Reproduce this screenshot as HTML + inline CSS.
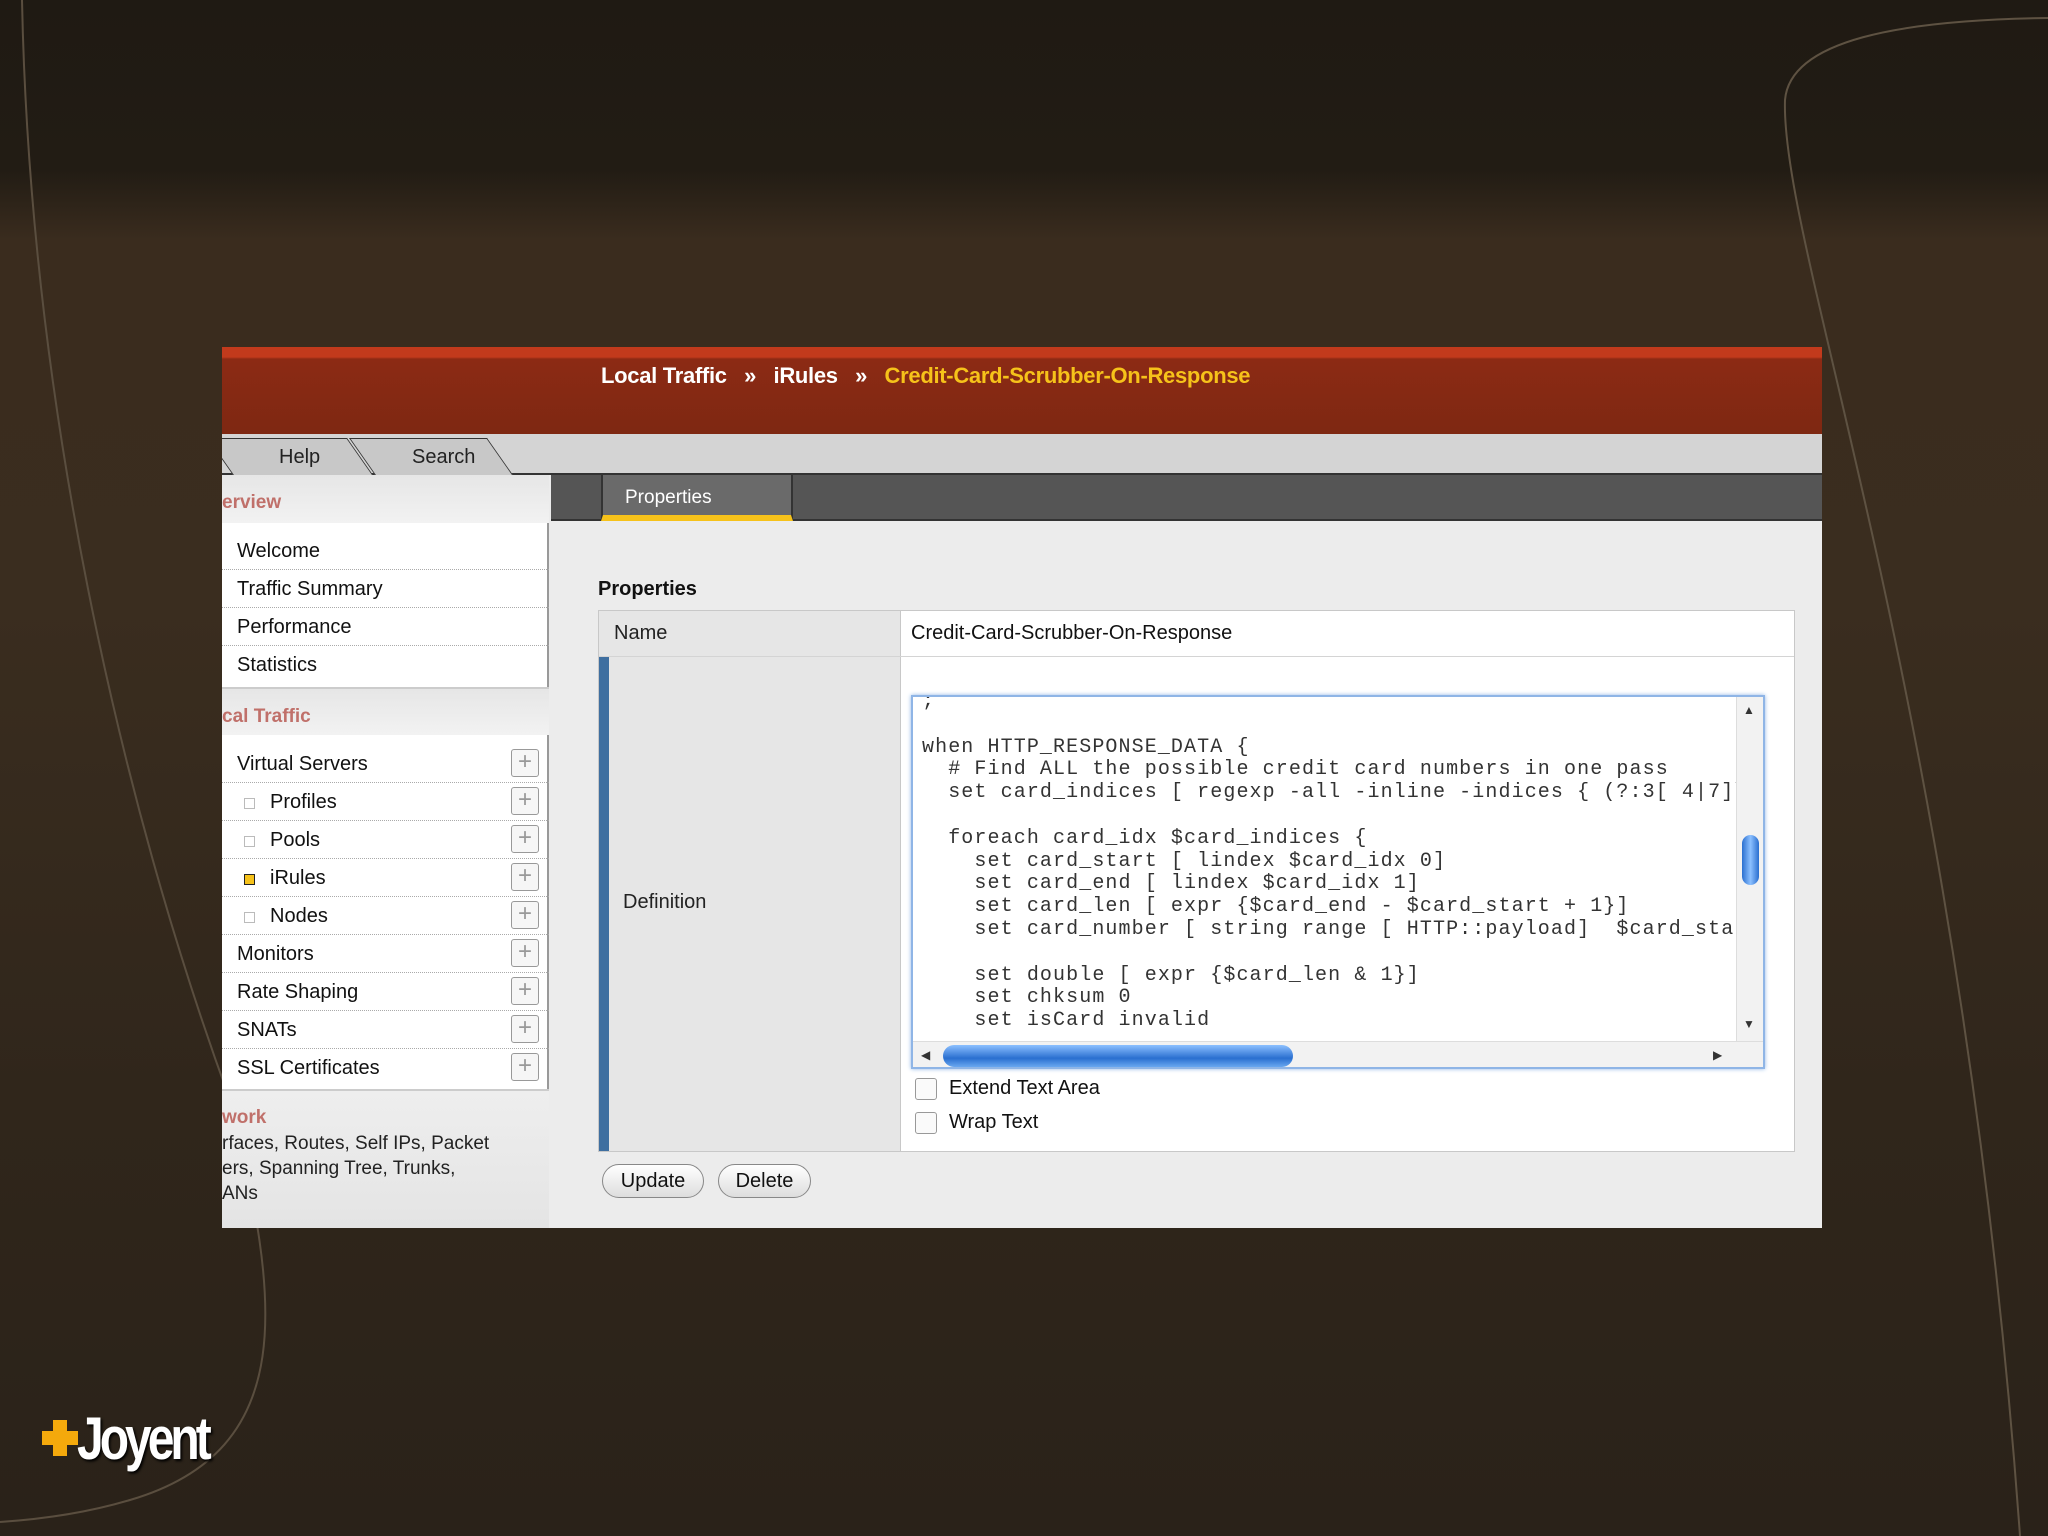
<!DOCTYPE html>
<html><head><meta charset="utf-8"><style>
*{margin:0;padding:0;box-sizing:border-box}
body{width:2048px;height:1536px;overflow:hidden;position:relative;font-family:"Liberation Sans",sans-serif;
background:linear-gradient(180deg,#1f1a13 0px,#221c14 170px,#3a2c1e 240px,#3a2d1f 600px,#30261b 1100px,#2a2219 1536px);}
.abs{position:absolute}
#shot{left:222px;top:347px;width:1600px;height:881px;background:#ececec;overflow:hidden}
#hdr{left:0;top:0;width:1600px;height:87px;background:linear-gradient(180deg,#c23a1c 0,#c23a1c 10px,#8c2a14 12px,#7e2812 87px)}
#crumb{left:379px;top:16px;font-weight:bold;font-size:22px;color:#fff;letter-spacing:-0.3px;white-space:nowrap}
#crumb .y{color:#f6c21a}
#tabs{left:0;top:87px;width:1600px;height:41px;background:#d4d4d4;border-bottom:2px solid #333}
.tab{position:absolute;top:4px;height:37px;background:#c8c8c8;border:1.5px solid #333;border-bottom:none;transform:skewX(35deg);}
.tabt{position:absolute;top:12px;font-size:20px;color:#222}
#side{left:0;top:128px;width:327px;height:753px;background:#fff;border-right:2px solid #999}
.sh{position:absolute;left:0;width:327px;height:48px;background:linear-gradient(#e6e6e6,#f2f2f2);color:#c0706a;font-weight:bold;font-size:19px;padding:17px 0 0 0}
.it{position:absolute;left:0;width:327px;height:38px;border-bottom:1.5px dotted #aaa;font-size:20px;color:#111;padding-top:8px}
.pl{position:absolute;right:10px;top:4px;width:28px;height:28px;border:1.5px solid #999;border-radius:3px;background:#f6f6f6;color:#999;font-size:24px;line-height:24px;text-align:center}
.sq{position:absolute;left:22px;top:15px;width:11px;height:11px;border:1.5px solid #bbb}
#dark{left:329px;top:128px;width:1271px;height:46px;background:#555;border-bottom:2px solid #333}
#ptab{width:192px;height:46px;background:#6a6a6a;border-bottom:6px solid #f6c21a;color:#fff;font-size:19px;padding:12px 0 0 22px;border-left:2px solid #333;border-right:2px solid #333}
.tbl{left:47px;top:87px;width:1197px;height:542px;border:1.5px solid #c8c8c8;background:#fff}
</style></head><body>
<svg class="abs" style="left:0;top:0" width="2048" height="1536">
<path d="M22 0 C30 400 120 800 230 1100 C280 1300 300 1450 130 1500 C80 1515 30 1520 0 1522" stroke="#5a4e3f" stroke-width="2" fill="none"/>
<path d="M2048 18 C1900 20 1790 40 1785 100 C1780 250 1960 700 2020 1536" stroke="#5e5242" stroke-width="2" fill="none"/>
</svg>
<div class="abs" id="shot">
 <div class="abs" id="hdr"><div class="abs" id="crumb">Local Traffic &nbsp;&nbsp;»&nbsp;&nbsp; iRules &nbsp;&nbsp;»&nbsp;&nbsp; <span class="y">Credit-Card-Scrubber-On-Response</span></div></div>
 <div class="abs" id="tabs">
  <div class="tab" style="left:-2px;width:140px"></div><div class="tab" style="left:140px;width:138px"></div>
  <div class="tabt" style="left:57px">Help</div><div class="tabt" style="left:190px">Search</div>
 </div>
 <div class="abs" id="side">
  <div class="sh" style="top:0">erview</div>
  <div class="it" style="top:57px;padding-left:15px">Welcome</div>
  <div class="it" style="top:95px;padding-left:15px">Traffic Summary</div>
  <div class="it" style="top:133px;padding-left:15px">Performance</div>
  <div class="it" style="top:171px;padding-left:15px;border-bottom:none">Statistics</div>
  <div class="sh" style="top:212px;border-top:2px solid #ccc">cal Traffic</div>
  <div class="it" style="top:270px;padding-left:15px">Virtual Servers<div class="pl">+</div></div>
  <div class="it" style="top:308px;padding-left:48px"><div class="sq"></div>Profiles<div class="pl">+</div></div>
  <div class="it" style="top:346px;padding-left:48px"><div class="sq"></div>Pools<div class="pl">+</div></div>
  <div class="it" style="top:384px;padding-left:48px"><div class="sq" style="border-color:#222;background:#f6c21a"></div>iRules<div class="pl">+</div></div>
  <div class="it" style="top:422px;padding-left:48px"><div class="sq"></div>Nodes<div class="pl">+</div></div>
  <div class="it" style="top:460px;padding-left:15px">Monitors<div class="pl">+</div></div>
  <div class="it" style="top:498px;padding-left:15px">Rate Shaping<div class="pl">+</div></div>
  <div class="it" style="top:536px;padding-left:15px">SNATs<div class="pl">+</div></div>
  <div class="it" style="top:574px;padding-left:15px;border-bottom:none">SSL Certificates<div class="pl">+</div></div>
  <div class="abs" style="top:614px;left:0;width:327px;height:140px;background:linear-gradient(#eee,#e4e4e4);border-top:2px solid #ccc">
   <div style="color:#c0706a;font-weight:bold;font-size:19px;margin-top:16px">work</div>
   <div style="font-size:19px;color:#222;line-height:25px;margin-top:2px">rfaces, Routes, Self IPs, Packet<br>ers, Spanning Tree, Trunks,<br>ANs</div>
  </div>
 </div>
 <div class="abs" id="dark"></div>
 <div class="abs" style="left:329px;top:176px;width:1271px;height:705px;background:#ececec">
  <div class="abs" style="left:47px;top:55px;font-weight:bold;font-size:20px;color:#111">Properties</div>
  <div class="abs tbl">
   <div class="abs" style="left:0;top:0;width:302px;height:540px;background:#e6e6e6;border-right:1.5px solid #c8c8c8"></div>
   <div class="abs" style="left:0;top:46px;width:10px;height:494px;background:#3f6fa0"></div>
   <div class="abs" style="left:0;top:45px;width:1195px;border-top:1.5px solid #d4d4d4"></div>
   <div class="abs" style="left:15px;top:11px;font-size:20px;color:#222">Name</div>
   <div class="abs" style="left:312px;top:11px;font-size:20px;color:#111">Credit-Card-Scrubber-On-Response</div>
   <div class="abs" style="left:24px;top:280px;font-size:20px;color:#222">Definition</div>
   <div class="abs" style="left:312px;top:84px;width:854px;height:374px;border:2px solid #8fb5e6;box-shadow:0 0 4px #8fb5e6;background:#fff;overflow:hidden">
    <pre style="position:absolute;left:9px;top:-6px;font-family:'Liberation Mono',monospace;font-size:20px;line-height:22.8px;color:#333;letter-spacing:1.1px">;

when HTTP_RESPONSE_DATA {
  # Find ALL the possible credit card numbers in one pass
  set card_indices [ regexp -all -inline -indices { (?:3[ 4|7]\d

  foreach card_idx $card_indices {
    set card_start [ lindex $card_idx 0]
    set card_end [ lindex $card_idx 1]
    set card_len [ expr {$card_end - $card_start + 1}]
    set card_number [ string range [ HTTP::payload]  $card_start

    set double [ expr {$card_len & 1}]
    set chksum 0
    set isCard invalid</pre>
    <div class="abs" style="right:0;top:0;width:27px;height:344px;background:#f2f2f2;border-left:1px solid #ddd">
     <div style="position:absolute;left:6px;top:6px;font-size:12px;color:#333">▲</div>
     <div style="position:absolute;left:5px;top:138px;width:17px;height:50px;border-radius:9px;background:linear-gradient(90deg,#2a6fd0,#8cc0ff,#2a6fd0)"></div>
     <div style="position:absolute;left:6px;top:320px;font-size:12px;color:#333">▼</div>
    </div>
    <div class="abs" style="left:0;top:344px;width:852px;height:28px;background:#f2f2f2;border-top:1px solid #ddd">
     <div style="position:absolute;left:8px;top:6px;font-size:12px;color:#333">◀</div>
     <div style="position:absolute;left:30px;top:3px;width:350px;height:22px;border-radius:11px;background:linear-gradient(#8cc0ff,#2a6fd0 60%,#6aa8f0)"></div>
     <div style="position:absolute;left:800px;top:6px;font-size:12px;color:#333">▶</div>
    </div>
   </div>
   <div class="abs" style="left:316px;top:467px;width:22px;height:22px;border:1.5px solid #999;border-radius:3px;background:#fafafa"></div>
   <div class="abs" style="left:350px;top:466px;font-size:20px;color:#111">Extend Text Area</div>
   <div class="abs" style="left:316px;top:501px;width:22px;height:22px;border:1.5px solid #999;border-radius:3px;background:#fafafa"></div>
   <div class="abs" style="left:350px;top:500px;font-size:20px;color:#111">Wrap Text</div>
  </div>
  <div class="abs" style="left:51px;top:641px;width:102px;height:34px;border:1.5px solid #888;border-radius:17px;background:linear-gradient(#fff,#ddd);font-size:20px;text-align:center;padding-top:5px;color:#111">Update</div>
  <div class="abs" style="left:167px;top:641px;width:93px;height:34px;border:1.5px solid #888;border-radius:17px;background:linear-gradient(#fff,#ddd);font-size:20px;text-align:center;padding-top:5px;color:#111">Delete</div>
 </div>
 <div class="abs" id="ptab" style="left:379px;top:128px">Properties</div>
</div>
<svg class="abs" style="left:42px;top:1420px" width="40" height="40"><path d="M11 0h14v11h11v14H25v11H11V25H0V11h11z" fill="#f4a90c"/></svg>
<div class="abs" style="left:77px;top:1404px;font-size:60px;font-weight:bold;color:#fff;letter-spacing:-5px;transform:scaleX(0.8);transform-origin:left;text-shadow:2px 2px 3px #000">Joyent</div>
</body></html>
